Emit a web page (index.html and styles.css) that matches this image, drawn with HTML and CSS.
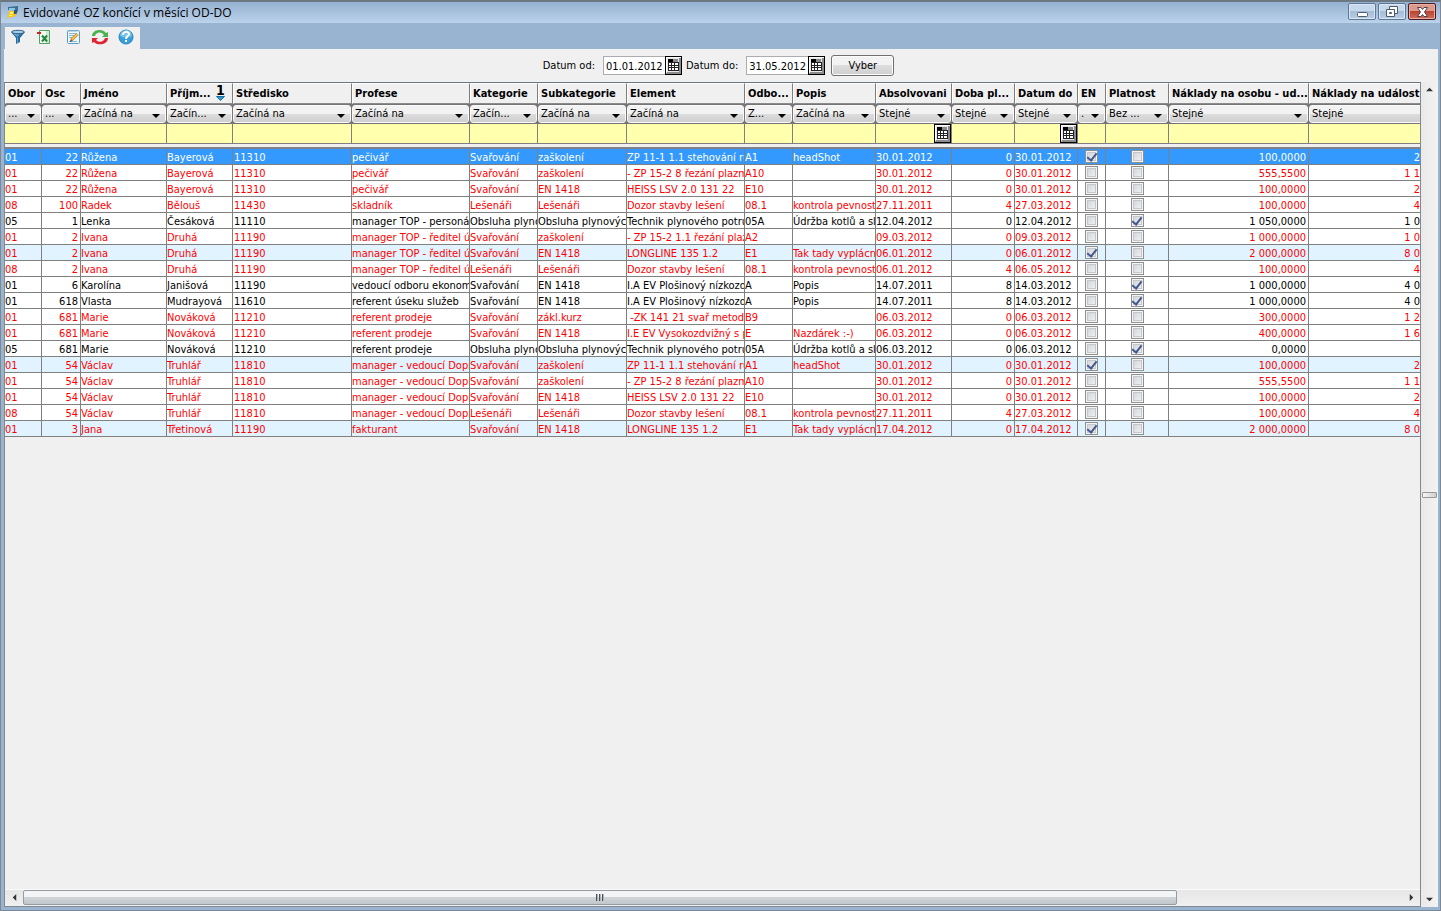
FILE: index.html
```html
<!DOCTYPE html>
<html lang="cs">
<head>
<meta charset="utf-8">
<title>Evidované OZ končící v měsíci OD-DO</title>
<link rel="stylesheet" href="styles.css">
</head>
<body>
<svg class="defs" aria-hidden="true">
  <symbol id="calendar" viewBox="0 0 17 19">
    <path fill="#000" d="M0 0h17v19H0z"/>
    <path fill="#fff" d="M1 1h15v17H1z"/>
    <path fill="#8c8c8c" d="M2 16h12V2h2v16H1z"/>
    <path fill="#e8e8e8" d="M2 2h12v14H2z"/>
    <path fill="#000" d="M3 3h5v3H3z"/>
    <path fill="#8a8a8a" d="M8 3h5v3H8z"/>
    <path fill="#222" d="M3 6h11v9H3z"/>
    <path fill="#fff" d="M4 7h2v2H4zM7 7h2v2H7zM10 7h3v2h-3zM4 10h2v1H4zM7 10h2v1H7zM10 10h3v1h-3zM4 12h2v2H4zM7 12h2v2H7zM10 12h3v2h-3z"/>
  </symbol>
</svg>
<div class="window">
  <header class="titlebar">
    <svg class="app-icon" viewBox="0 0 12 13"><path fill="#3b6f96" d="M1 1l10-1v4H1z"/><path fill="#8fc4de" d="M2 2h6v2H2z"/><path fill="#31566f" d="M7 4h4L9 9H6z"/><path fill="#f5c61e" d="M2 5h5v3h3l-3 3H3L0 13l1-4z"/><path fill="#fff06b" d="M3 6h3v2H3zM2 9h3v1H2z"/></svg>
    <h1 class="title">Evidované OZ končící v měsíci OD-DO</h1>
    <div class="window-buttons">
      <button class="wbtn" aria-label="Minimalizovat"><svg viewBox="0 0 28 16"><rect x="9.500" y="8.500" width="10" height="4" rx="1" fill="#fff" stroke="#4d5a69"/></svg></button>
      <button class="wbtn" aria-label="Obnovit"><svg viewBox="0 0 28 16"><path fill="#fff" stroke="#4d5a69" d="M11.500 2.500h8v7h-8zM14.500 5.500h2v1h-2z"/><path fill="#fff" stroke="#4d5a69" d="M8.500 5.500h8v7h-8zM11.500 8.500h2v1h-2z"/></svg></button>
      <button class="wbtn close" aria-label="Zavřít"><svg viewBox="0 0 28 16"><path fill="#fff" stroke="#51424a" d="M9.500 3.500h3.500l1.500 2 1.500-2h3.500L16.500 8l3 4.500H16l-1.500-2-1.500 2H9.500l3-4.500z"/></svg></button>
    </div>
  </header>
  <nav class="toolbar-row">
    <div class="toolbar">
      <button class="tool" aria-label="Filtr"><svg viewBox="0 0 16 16"><path fill="#2a6a9c" d="M1 3l5 6v6l4-2V9l5-6z"/><path fill="#5fa3d0" d="M7 9l1-1v6l-1 .5zM3 5h7L7.500 8z"/><ellipse cx="8" cy="3" rx="6.500" ry="1.700" fill="#a8cbe0" stroke="#28618c"/></svg></button>
      <button class="tool" aria-label="Export do Excelu"><svg viewBox="0 0 16 16"><path fill="#f4fbf4" stroke="#55a065" d="M3.500 1.500h10v13h-10z"/><path fill="#cce8cf" d="M10 2h3v12h-3z"/><path fill="none" stroke="#21853c" stroke-width="2" d="M6 6.500l5 6M11 6.500l-5 6"/><path fill="#c22" d="M1 3h4v2H1z"/></svg></button>
      <button class="tool edit" aria-label="Upravit"><svg viewBox="0 0 16 16"><rect x="2.500" y="1.500" width="12" height="13" rx="1" fill="#edf6fb" stroke="#5c9cc4"/><path stroke="#8ab6d3" d="M4 4.500h7M4 6.500h5M4 8.500h3M4 12.500h8M3 2h10"/><path stroke="#a87527" stroke-width="3" d="M6.500 11l6-6"/><path stroke="#f8bd45" stroke-width="2" d="M7 10.500l5.500-5.500"/><path fill="#333" d="M5 13l.7-2.500 1.600 1.600z"/></svg></button>
      <button class="tool" aria-label="Obnovit data"><svg viewBox="0 0 16 16"><path fill="#4ab34f" d="M0 7c0-7 11-8 14-3l2-1v5h-6l2-2C9 2 4 3 3 7z"/><path fill="#e02531" d="M16 9c0 7-11 8-14 4l-2 1V9h6l-2 2c3 3 8 2 9-2z"/></svg></button>
      <button class="tool" aria-label="Nápověda"><svg viewBox="0 0 16 16"><circle cx="8" cy="8" r="7" fill="#3a9fd9" stroke="#2384c0"/><path fill="#75c3eb" d="M2 7a6 6 0 0 1 12 0c-4 2-8 2-12 0z"/><path fill="none" stroke="#fff" stroke-width="2" d="M5 6c0-4 6-4 6-1 0 2-3 2-3 5"/><path fill="#fff" d="M7 11h2v2H7z"/></svg></button>
    </div>
  </nav>
  <main class="content">
    <form class="criteria">
      <label for="from">Datum od:</label>
      <span class="date-field"><input id="from" type="text" value="01.01.2012"><button type="button" class="cal" aria-label="Kalendář"><svg><use href="#calendar"/></svg></button></span>
      <label for="to">Datum do:</label>
      <span class="date-field"><input id="to" type="text" value="31.05.2012"><button type="button" class="cal" aria-label="Kalendář"><svg><use href="#calendar"/></svg></button></span>
      <button type="button" class="submit">Vyber</button>
    </form>
    <div class="grid-area">
      <section class="grid">
        <div class="viewport">
          <table class="records">
            <colgroup id="cols"></colgroup>
            <thead>
              <tr class="heads" id="heads"></tr>
              <tr class="ops" id="ops"></tr>
              <tr class="filters" id="filters"></tr>
              <tr class="gap"><td colspan="18"></td></tr>
            </thead>
            <tbody id="rows"></tbody>
          </table>
        </div>
        <div class="hscroll">
          <button class="arrow" aria-label="Vlevo"><svg viewBox="0 0 8 8"><path d="M6 0v8L2 4z"/></svg></button>
          <div class="htrack"><div class="hthumb"><i></i><i></i><i></i></div></div>
          <button class="arrow" aria-label="Vpravo"><svg viewBox="0 0 8 8"><path d="M2 0v8l4-4z"/></svg></button>
        </div>
      </section>
      <div class="vscroll">
        <button class="arrow" aria-label="Nahoru"><svg viewBox="0 0 8 8"><path d="M0 6h8L4 2z"/></svg></button>
        <div class="vthumb"></div>
        <button class="arrow" aria-label="Dolů"><svg viewBox="0 0 8 8"><path d="M0 2h8L4 6z"/></svg></button>
      </div>
    </div>
  </main>
</div>
<script src="script.js"></script>
</body>
</html>
```
FILE: styles.css
```css
* { box-sizing: border-box; }
body {
  margin: 0;
  font: 11px/15px "DejaVu Sans Condensed", "DejaVu Sans", sans-serif;
  color: #000;
}
button, input, select { font: inherit; color: inherit; margin: 0; padding: 0; }
button { border: 0; background: none; }
svg { display: block; }
.defs { position: absolute; width: 0; height: 0; }

.window {
  display: flex;
  flex-direction: column;
  height: 100vh;
  padding: 0 2px 3px 3px;
  background: #99b4d1;
  border: 1px solid #7f8792;
  border-top: 2px solid #6d7780;
}
.titlebar {
  display: flex;
  align-items: center;
  height: 21px;
  margin: 0 -2px 0 -3px;
  padding: 0 4px 0 6px;
  background: linear-gradient(#95b1d1, #bbd2ea);
}
.app-icon { width: 12px; height: 13px; }
.title {
  flex: 1;
  margin: 0 0 0 4px;
  font: 12px/18px "Open Sans", "Noto Sans", sans-serif;
}
.window-buttons { display: flex; gap: 2px; align-self: flex-start; margin-top: 1px; }
.wbtn {
  width: 28px;
  height: 17px;
  border: 1px solid #5e7794;
  border-radius: 2px;
  background: linear-gradient(#c6d8ec 50%, #a5bdd8 50%, #b9cee5);
  box-shadow: inset 0 0 0 1px #dbe7f4;
}
.wbtn svg { width: 28px; height: 16px; margin: -1px; }
.wbtn.close {
  border-color: #4a1c22;
  background: linear-gradient(#dc9a8d 50%, #bd4331 50%, #d0705c);
  box-shadow: inset 0 0 0 1px #e9aea3;
}

.toolbar-row { padding: 4px 1px 0; }
.toolbar {
  display: flex;
  gap: 11px;
  width: 135px;
  height: 22px;
  padding: 2px 0 0 5px;
  background: #f0f0f0;
}
.tool { width: 15px; height: 16px; }
.tool svg { width: 16px; height: 16px; }
.tool.edit { width: 16px; margin-left: 3px; }

.content {
  flex: 1;
  display: flex;
  flex-direction: column;
  min-height: 0;
  background: #f0f0f0;
}
.criteria {
  display: flex;
  align-items: center;
  justify-content: center;
  gap: 4px;
  height: 33px;
  padding-right: 5px;
}
.date-field { display: flex; margin-left: 4px; }
.date-field input {
  width: 62px;
  height: 19px;
  padding: 2px 0 0 2px;
  border: 1px solid #abadb3;
  border-right: 0;
  border-radius: 0;
  background: #fff;
  outline: 0;
}
.cal, .cal svg { width: 17px; height: 19px; }
.submit {
  width: 63px;
  height: 21px;
  margin-left: 2px;
  border: 1px solid #707070;
  border-radius: 3px;
  background: linear-gradient(#f2f2f2 50%, #dddddd 50%, #cfcfcf);
  box-shadow: inset 0 0 0 1px #fcfcfc;
}

.grid-area { flex: 1; display: flex; min-height: 0; }
.grid {
  flex: 1;
  display: flex;
  flex-direction: column;
  min-width: 0;
  border: 1px solid #828790;
  border-top-color: #6e747c;
}
.viewport { flex: 1; min-height: 0; overflow: hidden; }
.records {
  width: 1459px;
  table-layout: fixed;
  border-collapse: separate;
  border-spacing: 0;
}
.records th, .records td { padding: 0; overflow: hidden; white-space: nowrap; }
.heads th {
  height: 21px;
  padding: 0 0 1px 2px;
  border: 1px solid #fff;
  border-right: 1px solid #7d7d7d;
  border-bottom: 1px solid #8b8b8b;
  background: #f0f0f0;
  text-align: left;
  line-height: 17px;
}
.heads th.sorted { position: relative; }
.sort-mark { position: absolute; right: 6px; top: 0; width: 11px; text-align: center; font-size: 14px; line-height: 13px; }
.sort-mark svg { width: 9px; height: 5px; margin: -1px 0 0 1px; }
.ops td { position: relative; height: 20px; background: #757575; }
.ops select {
  display: block;
  width: calc(100% - 1px);
  height: 18px;
  padding: 0 12px 2px 2px;
  border: 1px solid #fafafa;
  border-radius: 3px;
  appearance: none;
  background: linear-gradient(#f2f2f2 50%, #dddddd 50%, #cfcfcf);
  outline: 0;
}
.ops td::after {
  content: "";
  position: absolute;
  right: 7px;
  top: 10px;
  border: 4px solid transparent;
  border-top-color: #000;
  border-bottom: 0;
}
.filters td {
  height: 20px;
  border-right: 1px solid #808080;
  border-bottom: 1px solid #808080;
  background: #ffffae;
}
.filter-cell { display: flex; height: 19px; }
.filter-cell input { flex: 1; width: 0; min-width: 0; border: 0; background: transparent; outline: 0; }
.gap td { height: 5px; border-bottom: 2px solid #808289; background: #f0f0f0; }

.records tbody td {
  height: 16px;
  padding: 2px 1px 0 0;
  border-right: 1px solid #808080;
  border-bottom: 1px solid #808080;
  background: #fff;
  line-height: 13px;
}
.records tbody td:nth-child(5) { padding-left: 1px; }
.records tbody tr.due { color: #f00; }
.records tbody tr.marked td { background: #e1f3ff; }
.records tbody tr.selected td { background: #3399ff; color: #fff; }
.records tbody td.num { text-align: right; padding-right: 2px; }
.records tbody td.check { padding: 0; }
.check input {
  appearance: none;
  display: grid;
  place-items: center;
  width: 13px;
  height: 13px;
  margin: 0 auto;
  border: 1px solid #8e8f8f;
  background: linear-gradient(135deg, #cbcfd5, #f6f6f6);
  box-shadow: inset 0 0 0 1px #f4f4f4, inset 0 0 0 2px #c4c8cc;
}
.check input:checked::after {
  content: "";
  width: 4px;
  height: 8px;
  margin-top: -2px;
  border: solid #42598f;
  border-width: 0 2px 2px 0;
  transform: rotate(38deg);
}

.hscroll {
  display: flex;
  align-items: flex-start;
  height: 17px;
  border-top: 1px solid #fafafa;
  background: linear-gradient(#e6e6e6, #f0f0f0);
}
.arrow { display: grid; place-items: center; flex: none; width: 18px; height: 15px; }
.arrow svg { width: 7px; height: 7px; fill: #333; }
.htrack { flex: 1; }
.hthumb {
  display: flex;
  align-items: center;
  justify-content: center;
  gap: 1px;
  width: 83.700%;
  height: 15px;
  border: 1px solid #959ba2;
  border-radius: 2px;
  background: linear-gradient(#f3f4f5 45%, #cfd4d8 50%, #c2c7cc);
}
.hthumb i { width: 2px; height: 7px; background: linear-gradient(90deg, #4c5157 50%, #b0b4b8 50%); }
.vscroll {
  display: flex;
  flex-direction: column;
  align-items: center;
  justify-content: space-between;
  width: 17px;
  background: linear-gradient(90deg, #e9e9e9, #f3f3f3);
}
.vthumb {
  width: 15px;
  height: 6px;
  border: 1px solid #979797;
  border-radius: 1px;
  background: linear-gradient(90deg, #f5f5f5, #cfcfcf);
}
```
FILE: script.js
```js
const columns = [
  ["Obor", 37, "..."], ["Osc", 39, "...", "num"], ["Jméno", 86, "Začíná na"],
  ["Příjm...", 66, "Začín..."], ["Středisko", 119, "Začíná na"], ["Profese", 118, "Začíná na"],
  ["Kategorie", 68, "Začín..."], ["Subkategorie", 89, "Začíná na"], ["Element", 118, "Začíná na"],
  ["Odbo...", 48, "Z..."], ["Popis", 83, "Začíná na"], ["Absolvovani", 76, "Stejné", "day"],
  ["Doba pl...", 63, "Stejné", "num"], ["Datum do", 63, "Stejné", "day"], ["EN", 28, ".", "check"],
  ["Platnost", 63, "Bez ...", "check"], ["Náklady na osobu - ud...", 140, "Stejné", "num"],
  ["Náklady na událost", 155, "Stejné", "num"]
];

const records = `
selected|01|22|Růžena|Bayerová|11310|pečivář|Svařování|zaškolení|ZP 11-1 1.1 stehování ru|A1|headShot|30.01.2012|0|30.01.2012|1|0|100,0000|200,0000
due|01|22|Růžena|Bayerová|11310|pečivář|Svařování|zaškolení|- ZP 15-2 8 řezání plazm|A10||30.01.2012|0|30.01.2012|0|0|555,5500|1 111,1000
due|01|22|Růžena|Bayerová|11310|pečivář|Svařování|EN 1418|HEISS LSV 2.0 131 22|E10||30.01.2012|0|30.01.2012|0|0|100,0000|200,0000
due|08|100|Radek|Bělouš|11430|skladník|Lešenáři|Lešenáři|Dozor stavby lešení|08.1|kontrola pevnost|27.11.2011|4|27.03.2012|0|0|100,0000|400,0000
|05|1|Lenka|Česáková|11110|manager TOP - personál|Obsluha plyno|Obsluha plynových|Technik plynového potru|05A|Údržba kotlů a sle|12.04.2012|0|12.04.2012|0|1|1 050,0000|1 050,0000
due|01|2|Ivana|Druhá|11190|manager TOP - ředitel ús|Svařování|zaškolení|- ZP 15-2 1.1 řezání plaz|A2||09.03.2012|0|09.03.2012|0|0|1 000,0000|1 000,0000
due marked|01|2|Ivana|Druhá|11190|manager TOP - ředitel ús|Svařování|EN 1418|LONGLINE 135 1.2|E1|Tak tady vyplácn|06.01.2012|0|06.01.2012|1|0|2 000,0000|8 000,0000
due|08|2|Ivana|Druhá|11190|manager TOP - ředitel ús|Lešenáři|Lešenáři|Dozor stavby lešení|08.1|kontrola pevnost|06.01.2012|4|06.05.2012|0|0|100,0000|400,0000
|01|6|Karolína|Janišová|11190|vedoucí odboru ekonomi|Svařování|EN 1418|I.A EV Plošinový nízkozd|A|Popis|14.07.2011|8|14.03.2012|0|1|1 000,0000|4 000,0000
|01|618|Vlasta|Mudrayová|11610|referent úseku služeb|Svařování|EN 1418|I.A EV Plošinový nízkozd|A|Popis|14.07.2011|8|14.03.2012|0|1|1 000,0000|4 000,0000
due|01|681|Marie|Nováková|11210|referent prodeje|Svařování|zákl.kurz|&nbsp;-ZK 141 21 svař metodo|B9||06.03.2012|0|06.03.2012|0|0|300,0000|1 200,0000
due|01|681|Marie|Nováková|11210|referent prodeje|Svařování|EN 1418|I.E EV Vysokozdvižný s p|E|Nazdárek :-)|06.03.2012|0|06.03.2012|0|0|400,0000|1 600,0000
|05|681|Marie|Nováková|11210|referent prodeje|Obsluha plyno|Obsluha plynových|Technik plynového potru|05A|Údržba kotlů a sle|06.03.2012|0|06.03.2012|0|1|0,0000|0,0000
due marked|01|54|Václav|Truhlář|11810|manager - vedoucí Dopr|Svařování|zaškolení|ZP 11-1 1.1 stehování ru|A1|headShot|30.01.2012|0|30.01.2012|1|0|100,0000|200,0000
due|01|54|Václav|Truhlář|11810|manager - vedoucí Dopr|Svařování|zaškolení|- ZP 15-2 8 řezání plazm|A10||30.01.2012|0|30.01.2012|0|0|555,5500|1 111,1000
due|01|54|Václav|Truhlář|11810|manager - vedoucí Dopr|Svařování|EN 1418|HEISS LSV 2.0 131 22|E10||30.01.2012|0|30.01.2012|0|0|100,0000|200,0000
due|08|54|Václav|Truhlář|11810|manager - vedoucí Dopr|Lešenáři|Lešenáři|Dozor stavby lešení|08.1|kontrola pevnost|27.11.2011|4|27.03.2012|0|0|100,0000|400,0000
due marked|01|3|Jana|Třetinová|11190|fakturant|Svařování|EN 1418|LONGLINE 135 1.2|E1|Tak tady vyplácn|17.04.2012|0|17.04.2012|1|0|2 000,0000|8 000,0000
`.trim().split("\n").map(line => line.split("|"));

const fill = (id, html) => { document.getElementById(id).innerHTML = html; };
const calendar = '<button class="cal" aria-label="Kalendář"><svg><use href="#calendar"/></svg></button>';
const sortMark = '<span class="sort-mark">1<svg viewBox="0 0 9 5"><path fill="#2d9ad3" stroke="#176f9f" d="M.500.500h8l-4 4z"/></svg></span>';

fill("cols", columns.map(c => `<col style="width:${c[1]}px">`).join(""));
fill("heads", columns.map((c, i) => `<th scope="col"${i === 3 ? ' class="sorted"' : ""}>${c[0]}${i === 3 ? sortMark : ""}</th>`).join(""));
fill("ops", columns.map(c => `<td><select aria-label="Podmínka ${c[0]}"><option>${c[2]}</option></select></td>`).join(""));
fill("filters", columns.map(c => `<td><div class="filter-cell"><input type="text" aria-label="Filtr ${c[0]}">${c[3] === "day" ? calendar : ""}</div></td>`).join(""));
fill("rows", records.map(([state, ...cells]) => `<tr class="${state}">` + cells.map((value, i) => {
  const kind = columns[i][3] || "";
  if (kind === "check") {
    return `<td class="check"><input type="checkbox" aria-label="${columns[i][0]}"${value === "1" ? " checked" : ""}></td>`;
  }
  return `<td class="${kind}">${value}</td>`;
}).join("") + "</tr>").join(""));
```
